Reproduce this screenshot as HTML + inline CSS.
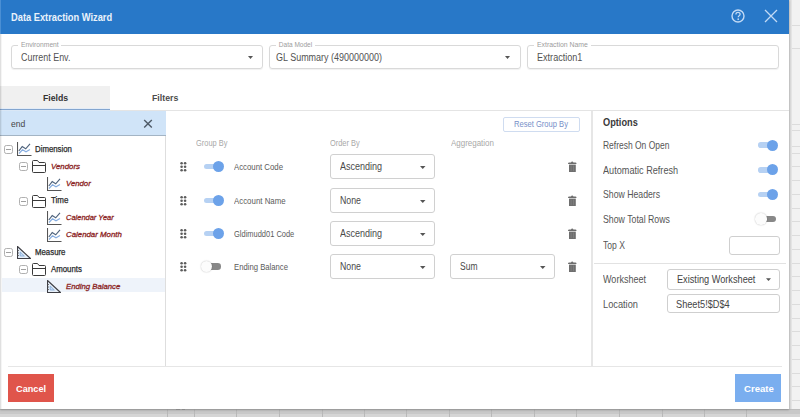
<!DOCTYPE html>
<html><head><meta charset="utf-8"><style>
html,body{margin:0;padding:0;width:800px;height:417px;overflow:hidden;background:#fff}
.a{position:absolute;display:block}
.t{position:absolute;line-height:1;white-space:nowrap;font-family:"Liberation Sans",sans-serif;transform-origin:0 0}
</style></head><body>
<div class="a" style="left:0px;top:0px;width:800px;height:417px;background:#f2f2f2"></div>
<div class="a" style="left:789px;top:25px;width:11px;height:1px;background:#dcdcdc"></div>
<div class="a" style="left:789px;top:48px;width:11px;height:1px;background:#dcdcdc"></div>
<div class="a" style="left:789px;top:124px;width:11px;height:1px;background:#dcdcdc"></div>
<div class="a" style="left:789px;top:130px;width:11px;height:1px;background:#dcdcdc"></div>
<div class="a" style="left:789px;top:146px;width:11px;height:1px;background:#dcdcdc"></div>
<div class="a" style="left:789px;top:153px;width:11px;height:1px;background:#dcdcdc"></div>
<div class="a" style="left:789px;top:166px;width:11px;height:1px;background:#dcdcdc"></div>
<div class="a" style="left:789px;top:180px;width:11px;height:1px;background:#dcdcdc"></div>
<div class="a" style="left:789px;top:194px;width:11px;height:1px;background:#dcdcdc"></div>
<div class="a" style="left:789px;top:208px;width:11px;height:1px;background:#dcdcdc"></div>
<div class="a" style="left:789px;top:221px;width:11px;height:1px;background:#dcdcdc"></div>
<div class="a" style="left:789px;top:235px;width:11px;height:1px;background:#dcdcdc"></div>
<div class="a" style="left:789px;top:249px;width:11px;height:1px;background:#dcdcdc"></div>
<div class="a" style="left:789px;top:263px;width:11px;height:1px;background:#dcdcdc"></div>
<div class="a" style="left:789px;top:276px;width:11px;height:1px;background:#dcdcdc"></div>
<div class="a" style="left:789px;top:290px;width:11px;height:1px;background:#dcdcdc"></div>
<div class="a" style="left:789px;top:304px;width:11px;height:1px;background:#dcdcdc"></div>
<div class="a" style="left:789px;top:318px;width:11px;height:1px;background:#dcdcdc"></div>
<div class="a" style="left:789px;top:331px;width:11px;height:1px;background:#dcdcdc"></div>
<div class="a" style="left:789px;top:345px;width:11px;height:1px;background:#dcdcdc"></div>
<div class="a" style="left:789px;top:359px;width:11px;height:1px;background:#dcdcdc"></div>
<div class="a" style="left:789px;top:373px;width:11px;height:1px;background:#dcdcdc"></div>
<div class="a" style="left:789px;top:386px;width:11px;height:1px;background:#dcdcdc"></div>
<div class="a" style="left:789px;top:400px;width:11px;height:1px;background:#dcdcdc"></div>
<div class="a" style="left:789px;top:414px;width:11px;height:1px;background:#dcdcdc"></div>
<div class="a" style="left:0px;top:409px;width:800px;height:1px;background:#bdbdbd"></div>
<div class="a" style="left:0px;top:410px;width:800px;height:4px;background:#c8c8c8"></div>
<div class="a" style="left:0px;top:414px;width:800px;height:3px;background:#d5d5d5"></div>
<div class="a" style="left:789px;top:0px;width:3px;height:409px;background:linear-gradient(90deg,#d0d0d0,#e8e8e8)"></div>
<div class="a" style="left:167px;top:409px;width:1px;height:8px;background:#b8b8b8"></div>
<div class="a" style="left:194px;top:409px;width:1px;height:8px;background:#b8b8b8"></div>
<div class="a" style="left:236px;top:409px;width:1px;height:8px;background:#b8b8b8"></div>
<div class="a" style="left:279px;top:409px;width:1px;height:8px;background:#b8b8b8"></div>
<div class="a" style="left:322px;top:409px;width:1px;height:8px;background:#b8b8b8"></div>
<div class="a" style="left:364px;top:409px;width:1px;height:8px;background:#b8b8b8"></div>
<div class="a" style="left:406px;top:409px;width:1px;height:8px;background:#b8b8b8"></div>
<div class="a" style="left:449px;top:409px;width:1px;height:8px;background:#b8b8b8"></div>
<div class="a" style="left:491px;top:409px;width:1px;height:8px;background:#b8b8b8"></div>
<div class="a" style="left:534px;top:409px;width:1px;height:8px;background:#b8b8b8"></div>
<div class="a" style="left:576px;top:409px;width:1px;height:8px;background:#b8b8b8"></div>
<div class="a" style="left:619px;top:409px;width:1px;height:8px;background:#b8b8b8"></div>
<div class="a" style="left:662px;top:409px;width:1px;height:8px;background:#b8b8b8"></div>
<div class="a" style="left:704px;top:409px;width:1px;height:8px;background:#b8b8b8"></div>
<div class="a" style="left:746px;top:409px;width:1px;height:8px;background:#b8b8b8"></div>
<div class="a" style="left:0px;top:0px;width:789px;height:409px;box-shadow:0 1px 2px rgba(0,0,0,0.25)"></div>
<div class="a" style="left:0px;top:0px;width:789px;height:409px;background:#fff"></div>
<div class="a" style="left:0px;top:0px;width:789px;height:34px;background:#2878c8"></div>
<div class="a" style="left:0px;top:0px;width:1px;height:34px;background:#4a8fd4"></div>
<div class="t" style="left:11.40px;top:11.82px;font-size:11.19px;font-weight:bold;font-style:normal;color:#eaf2fb;transform:scaleX(0.831);">Data Extraction Wizard</div>
<svg class="a" style="left:729px;top:8px;" width="18" height="18" viewBox="0 0 18 18"><circle cx="9" cy="8" r="6" fill="none" stroke="#c2daf5" stroke-width="1.4"/><path d="M6.9 6.4 C6.9 4.9 8 4.3 9 4.3 C10.2 4.3 11.1 5.1 11.1 6.2 C11.1 7.5 9.2 7.8 9.2 9.3" fill="none" stroke="#c2daf5" stroke-width="1.3"/><circle cx="9.2" cy="11.2" r="0.85" fill="#c2daf5"/></svg>
<svg class="a" style="left:764px;top:9px;" width="14" height="14" viewBox="0 0 14 14"><path d="M1 1 L13 13 M13 1 L1 13" stroke="#c2daf5" stroke-width="1.3"/></svg>
<div class="a" style="left:11px;top:45px;width:252px;height:24px;box-sizing:border-box;border:1px solid #d9d9d9;border-radius:3px;box-shadow:0 1px 1px rgba(0,0,0,0.06)"></div>
<div class="a" style="left:17.7px;top:42px;width:43.8px;height:6px;background:#fff"></div>
<div class="t" style="left:20.70px;top:41.56px;font-size:6.54px;font-weight:normal;font-style:normal;color:#9c9c9c;transform:scaleX(1.029);">Environment</div>
<div class="t" style="left:20.60px;top:51.85px;font-size:11.05px;font-weight:normal;font-style:normal;color:#525252;transform:scaleX(0.807);">Current Env.</div>
<svg class="a" style="left:248px;top:56px;" width="6" height="4" viewBox="0 0 6 4"><path d="M0 0 L5 0 L2.5 3 Z" fill="#555"/></svg>
<div class="a" style="left:269px;top:45px;width:252px;height:24px;box-sizing:border-box;border:1px solid #d9d9d9;border-radius:3px;box-shadow:0 1px 1px rgba(0,0,0,0.06)"></div>
<div class="a" style="left:275.8px;top:42px;width:39.39999999999998px;height:6px;background:#fff"></div>
<div class="t" style="left:278.80px;top:41.56px;font-size:6.54px;font-weight:normal;font-style:normal;color:#9c9c9c;">Data Model</div>
<div class="t" style="left:276.00px;top:51.85px;font-size:11.05px;font-weight:normal;font-style:normal;color:#525252;transform:scaleX(0.813);">GL Summary (490000000)</div>
<svg class="a" style="left:504.5px;top:56px;" width="6" height="4" viewBox="0 0 6 4"><path d="M0 0 L5 0 L2.5 3 Z" fill="#555"/></svg>
<div class="a" style="left:527px;top:45px;width:252px;height:24px;box-sizing:border-box;border:1px solid #d9d9d9;border-radius:3px;box-shadow:0 1px 1px rgba(0,0,0,0.06)"></div>
<div class="a" style="left:533.9px;top:42px;width:57.0px;height:6px;background:#fff"></div>
<div class="t" style="left:536.90px;top:41.56px;font-size:6.54px;font-weight:normal;font-style:normal;color:#9c9c9c;transform:scaleX(1.055);">Extraction Name</div>
<div class="t" style="left:536.90px;top:51.85px;font-size:11.05px;font-weight:normal;font-style:normal;color:#525252;transform:scaleX(0.822);">Extraction1</div>
<div class="a" style="left:0px;top:86px;width:110px;height:23px;background:#f0f0f0"></div>
<div class="a" style="left:0px;top:108px;width:110px;height:1px;background:#e3ecf7"></div>
<div class="a" style="left:0px;top:109px;width:110px;height:1px;background:#83a5cf"></div>
<div class="a" style="left:110px;top:110px;width:679px;height:1px;background:#e4e4e4"></div>
<div class="a" style="left:0px;top:110px;width:110px;height:1px;background:#dae7f5"></div>
<div class="t" style="left:42.80px;top:93.08px;font-size:9.59px;font-weight:bold;font-style:normal;color:#333;transform:scaleX(0.909);">Fields</div>
<div class="t" style="left:151.90px;top:93.08px;font-size:9.59px;font-weight:bold;font-style:normal;color:#4c4c4c;transform:scaleX(0.914);">Filters</div>
<div class="a" style="left:0px;top:111px;width:166px;height:24px;background:#d0e4f8"></div>
<div class="a" style="left:0px;top:135px;width:166px;height:1px;background:#a3b4c4"></div>
<div class="t" style="left:10.50px;top:118.75px;font-size:9.74px;font-weight:normal;font-style:normal;color:#474747;transform:scaleX(0.880);">end</div>
<svg class="a" style="left:143px;top:119px;" width="10" height="10" viewBox="0 0 10 10"><path d="M1.2 1 L8.8 8.4 M8.8 1 L1.2 8.4" stroke="#4f5b68" stroke-width="1.45"/></svg>
<div class="a" style="left:165px;top:136px;width:1px;height:230px;background:#dedede"></div>
<div class="a" style="left:2px;top:278px;width:163px;height:14px;background:#eef3fa"></div>
<svg class="a" style="left:4px;top:145px;" width="10" height="10" viewBox="0 0 10 10"><rect x="0.5" y="0.5" width="8" height="8" rx="1.8" fill="none" stroke="#b0b0b0"/><path d="M2 4.5 H7" stroke="#a0a0a0"/></svg>
<svg class="a" style="left:17px;top:142px;" width="16" height="15" viewBox="0 0 16 15"><path d="M0.5 0 V13.5 H14.5" fill="none" stroke="#555" stroke-width="1.1"/><path d="M1.8 9 L5.2 4.6 L8.7 6.8 L13 1.8" fill="none" stroke="#4d627c" stroke-width="1.1"/><path d="M2 11.5 L5.5 7.8 L9 9.8 L13 7.5" fill="none" stroke="#86ade0" stroke-width="1.1"/></svg>
<div class="t" style="left:35.20px;top:145.71px;font-size:8.14px;font-weight:normal;font-style:normal;color:#2b2b2b;transform:scaleX(0.962);-webkit-text-stroke:0.25px #2b2b2b;">Dimension</div>
<svg class="a" style="left:19px;top:162px;" width="10" height="10" viewBox="0 0 10 10"><rect x="0.5" y="0.5" width="8" height="8" rx="1.8" fill="none" stroke="#b0b0b0"/><path d="M2 4.5 H7" stroke="#a0a0a0"/></svg>
<svg class="a" style="left:32px;top:160px;" width="15" height="14" viewBox="0 0 15 14"><path d="M0.5 11.5 V1.5 Q0.5 0.5 1.5 0.5 H5.5 L7 2.5 H12.5 Q13.5 2.5 13.5 3.5 V11.5 Q13.5 12.5 12.5 12.5 H1.5 Q0.5 12.5 0.5 11.5 Z" fill="none" stroke="#3a3a3a" stroke-width="1"/><path d="M0.5 5.5 H13.5" stroke="#3a3a3a" stroke-width="1"/></svg>
<div class="t" style="left:51.00px;top:162.80px;font-size:7.85px;font-weight:normal;font-style:italic;color:#8c2424;-webkit-text-stroke:0.3px #8c2424;">Vendors</div>
<svg class="a" style="left:47px;top:177px;" width="16" height="15" viewBox="0 0 16 15"><path d="M0.5 0 V13.5 H14.5" fill="none" stroke="#555" stroke-width="1.1"/><path d="M1.8 9 L5.2 4.6 L8.7 6.8 L13 1.8" fill="none" stroke="#4d627c" stroke-width="1.1"/><path d="M2 11.5 L5.5 7.8 L9 9.8 L13 7.5" fill="none" stroke="#86ade0" stroke-width="1.1"/></svg>
<div class="t" style="left:66.00px;top:179.95px;font-size:7.85px;font-weight:normal;font-style:italic;color:#8c2424;transform:scaleX(0.989);-webkit-text-stroke:0.3px #8c2424;">Vendor</div>
<svg class="a" style="left:19px;top:197px;" width="10" height="10" viewBox="0 0 10 10"><rect x="0.5" y="0.5" width="8" height="8" rx="1.8" fill="none" stroke="#b0b0b0"/><path d="M2 4.5 H7" stroke="#a0a0a0"/></svg>
<svg class="a" style="left:32px;top:195px;" width="15" height="14" viewBox="0 0 15 14"><path d="M0.5 11.5 V1.5 Q0.5 0.5 1.5 0.5 H5.5 L7 2.5 H12.5 Q13.5 2.5 13.5 3.5 V11.5 Q13.5 12.5 12.5 12.5 H1.5 Q0.5 12.5 0.5 11.5 Z" fill="none" stroke="#3a3a3a" stroke-width="1"/><path d="M0.5 5.5 H13.5" stroke="#3a3a3a" stroke-width="1"/></svg>
<div class="t" style="left:51.00px;top:197.16px;font-size:8.14px;font-weight:normal;font-style:normal;color:#2b2b2b;transform:scaleX(0.978);-webkit-text-stroke:0.25px #2b2b2b;">Time</div>
<svg class="a" style="left:47px;top:211px;" width="16" height="15" viewBox="0 0 16 15"><path d="M0.5 0 V13.5 H14.5" fill="none" stroke="#555" stroke-width="1.1"/><path d="M1.8 9 L5.2 4.6 L8.7 6.8 L13 1.8" fill="none" stroke="#4d627c" stroke-width="1.1"/><path d="M2 11.5 L5.5 7.8 L9 9.8 L13 7.5" fill="none" stroke="#86ade0" stroke-width="1.1"/></svg>
<div class="t" style="left:66.00px;top:214.25px;font-size:7.85px;font-weight:normal;font-style:italic;color:#8c2424;transform:scaleX(0.954);-webkit-text-stroke:0.3px #8c2424;">Calendar Year</div>
<svg class="a" style="left:47px;top:228px;" width="16" height="15" viewBox="0 0 16 15"><path d="M0.5 0 V13.5 H14.5" fill="none" stroke="#555" stroke-width="1.1"/><path d="M1.8 9 L5.2 4.6 L8.7 6.8 L13 1.8" fill="none" stroke="#4d627c" stroke-width="1.1"/><path d="M2 11.5 L5.5 7.8 L9 9.8 L13 7.5" fill="none" stroke="#86ade0" stroke-width="1.1"/></svg>
<div class="t" style="left:66.00px;top:231.40px;font-size:7.85px;font-weight:normal;font-style:italic;color:#8c2424;-webkit-text-stroke:0.3px #8c2424;">Calendar Month</div>
<svg class="a" style="left:4px;top:248px;" width="10" height="10" viewBox="0 0 10 10"><rect x="0.5" y="0.5" width="8" height="8" rx="1.8" fill="none" stroke="#b0b0b0"/><path d="M2 4.5 H7" stroke="#a0a0a0"/></svg>
<svg class="a" style="left:17px;top:246px;" width="15" height="15" viewBox="0 0 15 15"><path d="M0.5 0.5 V12.5 H13.5 Z" fill="#e6eff9" stroke="#3e3e44" stroke-width="1.1" stroke-linejoin="round"/><path d="M3.2 6 V10 H7.3 Z" fill="#c9dcf2" stroke="#7ea6d6" stroke-width="0.8"/><path d="M0.5 4.5 H2 M0.5 7 H2 M0.5 9.5 H2" stroke="#555" stroke-width="0.8"/></svg>
<div class="t" style="left:35.20px;top:248.61px;font-size:8.14px;font-weight:normal;font-style:normal;color:#2b2b2b;transform:scaleX(0.963);-webkit-text-stroke:0.25px #2b2b2b;">Measure</div>
<svg class="a" style="left:19px;top:265px;" width="10" height="10" viewBox="0 0 10 10"><rect x="0.5" y="0.5" width="8" height="8" rx="1.8" fill="none" stroke="#b0b0b0"/><path d="M2 4.5 H7" stroke="#a0a0a0"/></svg>
<svg class="a" style="left:32px;top:263px;" width="15" height="14" viewBox="0 0 15 14"><path d="M0.5 11.5 V1.5 Q0.5 0.5 1.5 0.5 H5.5 L7 2.5 H12.5 Q13.5 2.5 13.5 3.5 V11.5 Q13.5 12.5 12.5 12.5 H1.5 Q0.5 12.5 0.5 11.5 Z" fill="none" stroke="#3a3a3a" stroke-width="1"/><path d="M0.5 5.5 H13.5" stroke="#3a3a3a" stroke-width="1"/></svg>
<div class="t" style="left:51.00px;top:265.76px;font-size:8.14px;font-weight:normal;font-style:normal;color:#2b2b2b;transform:scaleX(0.965);-webkit-text-stroke:0.25px #2b2b2b;">Amounts</div>
<svg class="a" style="left:47px;top:280px;" width="15" height="15" viewBox="0 0 15 15"><path d="M0.5 0.5 V12.5 H13.5 Z" fill="#e6eff9" stroke="#3e3e44" stroke-width="1.1" stroke-linejoin="round"/><path d="M3.2 6 V10 H7.3 Z" fill="#c9dcf2" stroke="#7ea6d6" stroke-width="0.8"/><path d="M0.5 4.5 H2 M0.5 7 H2 M0.5 9.5 H2" stroke="#555" stroke-width="0.8"/></svg>
<div class="t" style="left:66.00px;top:282.85px;font-size:7.85px;font-weight:normal;font-style:italic;color:#8c2424;transform:scaleX(0.986);-webkit-text-stroke:0.3px #8c2424;">Ending Balance</div>
<div class="t" style="left:196.00px;top:139.09px;font-size:8.87px;font-weight:normal;font-style:normal;color:#a8a8a8;transform:scaleX(0.838);">Group By</div>
<div class="t" style="left:330.20px;top:139.16px;font-size:8.43px;font-weight:normal;font-style:normal;color:#a8a8a8;transform:scaleX(0.881);">Order By</div>
<div class="t" style="left:451.00px;top:138.52px;font-size:9.30px;font-weight:normal;font-style:normal;color:#a8a8a8;transform:scaleX(0.857);">Aggregation</div>
<div class="a" style="left:503px;top:117px;width:77px;height:15px;box-sizing:border-box;border:1px solid #cfdcf0;border-radius:2px"></div>
<div class="t" style="left:514.40px;top:119.62px;font-size:8.72px;font-weight:normal;font-style:normal;color:#7890c8;transform:scaleX(0.870);">Reset Group By</div>
<svg class="a" style="left:180px;top:161px;" width="7" height="11" viewBox="0 0 7 11"><circle cx="1.6" cy="2.2" r="1.3" fill="#5c5c5c"/><circle cx="1.6" cy="5.8" r="1.3" fill="#5c5c5c"/><circle cx="1.6" cy="9.3" r="1.3" fill="#5c5c5c"/><circle cx="5.1" cy="2.2" r="1.3" fill="#5c5c5c"/><circle cx="5.1" cy="5.8" r="1.3" fill="#5c5c5c"/><circle cx="5.1" cy="9.3" r="1.3" fill="#5c5c5c"/></svg>
<div class="a" style="left:204.0px;top:163.79999999999998px;width:15px;height:5.6px;background:#b6d1f3;border-radius:2.8px"></div>
<div class="a" style="left:213.0px;top:161.1px;width:11px;height:11px;background:#6ca2e9;border-radius:50%"></div>
<div class="t" style="left:233.50px;top:161.70px;font-size:9.45px;font-weight:normal;font-style:normal;color:#5a5a5a;transform:scaleX(0.827);">Account Code</div>
<div class="a" style="left:330px;top:154px;width:105px;height:25px;box-sizing:border-box;border:1px solid #d0d0d0;border-radius:3px"></div>
<div class="t" style="left:340.00px;top:161.59px;font-size:10.17px;font-weight:normal;font-style:normal;color:#4a4a4a;transform:scaleX(0.888);">Ascending</div>
<svg class="a" style="left:420px;top:166px;" width="6" height="4" viewBox="0 0 6 4"><path d="M0 0 L5.5 0 L2.75 3 Z" fill="#555"/></svg>
<svg class="a" style="left:568px;top:161px;" width="10" height="12" viewBox="0 0 10 12"><path d="M0 2.8 Q0 1.6 1.2 1.6 H3 Q3.3 0.4 4.2 0.4 Q5.1 0.4 5.4 1.6 H7.3 Q8.5 1.6 8.5 2.8 V3 H0 Z" fill="#6e6e6e"/><path d="M1 3.6 H7.8 V11 H1 Z" fill="#6e6e6e"/><path d="M3.1 4.5 V10.2 M5.6 4.5 V10.2" stroke="#8c8c8c" stroke-width="0.6"/></svg>
<svg class="a" style="left:180px;top:195px;" width="7" height="11" viewBox="0 0 7 11"><circle cx="1.6" cy="2.2" r="1.3" fill="#5c5c5c"/><circle cx="1.6" cy="5.8" r="1.3" fill="#5c5c5c"/><circle cx="1.6" cy="9.3" r="1.3" fill="#5c5c5c"/><circle cx="5.1" cy="2.2" r="1.3" fill="#5c5c5c"/><circle cx="5.1" cy="5.8" r="1.3" fill="#5c5c5c"/><circle cx="5.1" cy="9.3" r="1.3" fill="#5c5c5c"/></svg>
<div class="a" style="left:204.0px;top:197.79999999999998px;width:15px;height:5.6px;background:#b6d1f3;border-radius:2.8px"></div>
<div class="a" style="left:213.0px;top:195.1px;width:11px;height:11px;background:#6ca2e9;border-radius:50%"></div>
<div class="t" style="left:233.50px;top:195.70px;font-size:9.45px;font-weight:normal;font-style:normal;color:#5a5a5a;transform:scaleX(0.834);">Account Name</div>
<div class="a" style="left:330px;top:188px;width:105px;height:25px;box-sizing:border-box;border:1px solid #d0d0d0;border-radius:3px"></div>
<div class="t" style="left:340.00px;top:195.59px;font-size:10.17px;font-weight:normal;font-style:normal;color:#4a4a4a;transform:scaleX(0.863);">None</div>
<svg class="a" style="left:420px;top:200px;" width="6" height="4" viewBox="0 0 6 4"><path d="M0 0 L5.5 0 L2.75 3 Z" fill="#555"/></svg>
<svg class="a" style="left:568px;top:195px;" width="10" height="12" viewBox="0 0 10 12"><path d="M0 2.8 Q0 1.6 1.2 1.6 H3 Q3.3 0.4 4.2 0.4 Q5.1 0.4 5.4 1.6 H7.3 Q8.5 1.6 8.5 2.8 V3 H0 Z" fill="#6e6e6e"/><path d="M1 3.6 H7.8 V11 H1 Z" fill="#6e6e6e"/><path d="M3.1 4.5 V10.2 M5.6 4.5 V10.2" stroke="#8c8c8c" stroke-width="0.6"/></svg>
<svg class="a" style="left:180px;top:228px;" width="7" height="11" viewBox="0 0 7 11"><circle cx="1.6" cy="2.2" r="1.3" fill="#5c5c5c"/><circle cx="1.6" cy="5.8" r="1.3" fill="#5c5c5c"/><circle cx="1.6" cy="9.3" r="1.3" fill="#5c5c5c"/><circle cx="5.1" cy="2.2" r="1.3" fill="#5c5c5c"/><circle cx="5.1" cy="5.8" r="1.3" fill="#5c5c5c"/><circle cx="5.1" cy="9.3" r="1.3" fill="#5c5c5c"/></svg>
<div class="a" style="left:204.0px;top:230.79999999999998px;width:15px;height:5.6px;background:#b6d1f3;border-radius:2.8px"></div>
<div class="a" style="left:213.0px;top:228.1px;width:11px;height:11px;background:#6ca2e9;border-radius:50%"></div>
<div class="t" style="left:233.50px;top:228.70px;font-size:9.45px;font-weight:normal;font-style:normal;color:#5a5a5a;transform:scaleX(0.792);">Gldimudd01 Code</div>
<div class="a" style="left:330px;top:221px;width:105px;height:25px;box-sizing:border-box;border:1px solid #d0d0d0;border-radius:3px"></div>
<div class="t" style="left:340.00px;top:228.59px;font-size:10.17px;font-weight:normal;font-style:normal;color:#4a4a4a;transform:scaleX(0.888);">Ascending</div>
<svg class="a" style="left:420px;top:233px;" width="6" height="4" viewBox="0 0 6 4"><path d="M0 0 L5.5 0 L2.75 3 Z" fill="#555"/></svg>
<svg class="a" style="left:568px;top:228px;" width="10" height="12" viewBox="0 0 10 12"><path d="M0 2.8 Q0 1.6 1.2 1.6 H3 Q3.3 0.4 4.2 0.4 Q5.1 0.4 5.4 1.6 H7.3 Q8.5 1.6 8.5 2.8 V3 H0 Z" fill="#6e6e6e"/><path d="M1 3.6 H7.8 V11 H1 Z" fill="#6e6e6e"/><path d="M3.1 4.5 V10.2 M5.6 4.5 V10.2" stroke="#8c8c8c" stroke-width="0.6"/></svg>
<svg class="a" style="left:180px;top:261px;" width="7" height="11" viewBox="0 0 7 11"><circle cx="1.6" cy="2.2" r="1.3" fill="#5c5c5c"/><circle cx="1.6" cy="5.8" r="1.3" fill="#5c5c5c"/><circle cx="1.6" cy="9.3" r="1.3" fill="#5c5c5c"/><circle cx="5.1" cy="2.2" r="1.3" fill="#5c5c5c"/><circle cx="5.1" cy="5.8" r="1.3" fill="#5c5c5c"/><circle cx="5.1" cy="9.3" r="1.3" fill="#5c5c5c"/></svg>
<div class="a" style="left:206.4px;top:263.3px;width:14.5px;height:6.6px;background:#888;border-radius:3.3px"></div>
<div class="a" style="left:200.70000000000002px;top:260.90000000000003px;width:11.4px;height:11.4px;background:#fcfcfc;border-radius:50%;box-shadow:0 0 1.5px rgba(0,0,0,0.3)"></div>
<div class="t" style="left:233.50px;top:261.70px;font-size:9.45px;font-weight:normal;font-style:normal;color:#5a5a5a;transform:scaleX(0.817);">Ending Balance</div>
<div class="a" style="left:330px;top:254px;width:105px;height:25px;box-sizing:border-box;border:1px solid #d0d0d0;border-radius:3px"></div>
<div class="t" style="left:340.00px;top:261.59px;font-size:10.17px;font-weight:normal;font-style:normal;color:#4a4a4a;transform:scaleX(0.863);">None</div>
<svg class="a" style="left:420px;top:266px;" width="6" height="4" viewBox="0 0 6 4"><path d="M0 0 L5.5 0 L2.75 3 Z" fill="#555"/></svg>
<svg class="a" style="left:568px;top:261px;" width="10" height="12" viewBox="0 0 10 12"><path d="M0 2.8 Q0 1.6 1.2 1.6 H3 Q3.3 0.4 4.2 0.4 Q5.1 0.4 5.4 1.6 H7.3 Q8.5 1.6 8.5 2.8 V3 H0 Z" fill="#6e6e6e"/><path d="M1 3.6 H7.8 V11 H1 Z" fill="#6e6e6e"/><path d="M3.1 4.5 V10.2 M5.6 4.5 V10.2" stroke="#8c8c8c" stroke-width="0.6"/></svg>
<div class="a" style="left:450px;top:254px;width:105px;height:25px;box-sizing:border-box;border:1px solid #d0d0d0;border-radius:3px"></div>
<div class="t" style="left:460.00px;top:261.32px;font-size:10.61px;font-weight:normal;font-style:normal;color:#4a4a4a;transform:scaleX(0.802);">Sum</div>
<svg class="a" style="left:540.3px;top:266px;" width="6" height="4" viewBox="0 0 6 4"><path d="M0 0 L5.5 0 L2.75 3 Z" fill="#555"/></svg>
<div class="a" style="left:591px;top:111px;width:2px;height:255px;background:#e6e6e6"></div>
<div class="t" style="left:603.40px;top:117.61px;font-size:10.03px;font-weight:bold;font-style:normal;color:#3a3a3a;transform:scaleX(0.919);">Options</div>
<div class="t" style="left:603.00px;top:141.09px;font-size:10.17px;font-weight:normal;font-style:normal;color:#555;transform:scaleX(0.834);">Refresh On Open</div>
<div class="a" style="left:757.5px;top:142.39999999999998px;width:15px;height:5.6px;background:#b6d1f3;border-radius:2.8px"></div>
<div class="a" style="left:766.5px;top:139.7px;width:11px;height:11px;background:#6ca2e9;border-radius:50%"></div>
<div class="t" style="left:603.00px;top:165.64px;font-size:10.17px;font-weight:normal;font-style:normal;color:#555;transform:scaleX(0.899);">Automatic Refresh</div>
<div class="a" style="left:757.5px;top:166.99999999999997px;width:15px;height:5.6px;background:#b6d1f3;border-radius:2.8px"></div>
<div class="a" style="left:766.5px;top:164.29999999999998px;width:11px;height:11px;background:#6ca2e9;border-radius:50%"></div>
<div class="t" style="left:603.00px;top:190.19px;font-size:10.17px;font-weight:normal;font-style:normal;color:#555;transform:scaleX(0.857);">Show Headers</div>
<div class="a" style="left:757.5px;top:191.59999999999997px;width:15px;height:5.6px;background:#b6d1f3;border-radius:2.8px"></div>
<div class="a" style="left:766.5px;top:188.89999999999998px;width:11px;height:11px;background:#6ca2e9;border-radius:50%"></div>
<div class="t" style="left:603.00px;top:214.74px;font-size:10.17px;font-weight:normal;font-style:normal;color:#555;transform:scaleX(0.861);">Show Total Rows</div>
<div class="a" style="left:761px;top:215.7px;width:14.5px;height:6.6px;background:#888;border-radius:3.3px"></div>
<div class="a" style="left:755.3px;top:213.3px;width:11.4px;height:11.4px;background:#fcfcfc;border-radius:50%;box-shadow:0 0 1.5px rgba(0,0,0,0.3)"></div>
<div class="t" style="left:603.00px;top:240.02px;font-size:10.61px;font-weight:normal;font-style:normal;color:#555;transform:scaleX(0.811);">Top X</div>
<div class="a" style="left:729px;top:236px;width:51px;height:19px;box-sizing:border-box;border:1px solid #cfcfcf;border-radius:3px"></div>
<div class="a" style="left:594px;top:263px;width:192px;height:1px;background:#e2e2e2"></div>
<div class="t" style="left:603.00px;top:274.27px;font-size:10.90px;font-weight:normal;font-style:normal;color:#555;transform:scaleX(0.829);">Worksheet</div>
<div class="a" style="left:667px;top:269px;width:113px;height:21px;box-sizing:border-box;border:1px solid #cfcfcf;border-radius:3px"></div>
<div class="t" style="left:677.00px;top:274.27px;font-size:10.90px;font-weight:normal;font-style:normal;color:#444;transform:scaleX(0.843);">Existing Worksheet</div>
<svg class="a" style="left:766px;top:278px;" width="6" height="4" viewBox="0 0 6 4"><path d="M0 0.2 L5 0.2 L2.5 2.9 Z" fill="#555"/></svg>
<div class="t" style="left:603.00px;top:298.77px;font-size:10.90px;font-weight:normal;font-style:normal;color:#555;transform:scaleX(0.849);">Location</div>
<div class="a" style="left:667px;top:294px;width:113px;height:19px;box-sizing:border-box;border:1px solid #cfcfcf;border-radius:3px"></div>
<div class="t" style="left:675.80px;top:298.77px;font-size:10.90px;font-weight:normal;font-style:normal;color:#444;transform:scaleX(0.845);">Sheet5!$D$4</div>
<div class="a" style="left:8px;top:366px;width:774px;height:1px;background:#e6e6e6"></div>
<div class="a" style="left:176px;top:409px;width:4px;height:1px;background:#8a8a8a"></div>
<div class="a" style="left:182px;top:409px;width:3px;height:1px;background:#8a8a8a"></div>
<div class="a" style="left:8px;top:374px;width:46px;height:28px;background:#e0554b"></div>
<div class="t" style="left:15.70px;top:383.53px;font-size:9.88px;font-weight:bold;font-style:normal;color:#fff;transform:scaleX(0.929);">Cancel</div>
<div class="a" style="left:735px;top:374px;width:46px;height:28px;background:#7aaeef"></div>
<div class="a" style="left:0px;top:34px;width:1px;height:375px;background:rgba(0,0,0,0.12)"></div>
<div class="a" style="left:1px;top:34px;width:1px;height:375px;background:rgba(0,0,0,0.04)"></div>
<div class="t" style="left:743.60px;top:383.53px;font-size:9.88px;font-weight:bold;font-style:normal;color:#fff;transform:scaleX(0.969);">Create</div>
</body></html>
